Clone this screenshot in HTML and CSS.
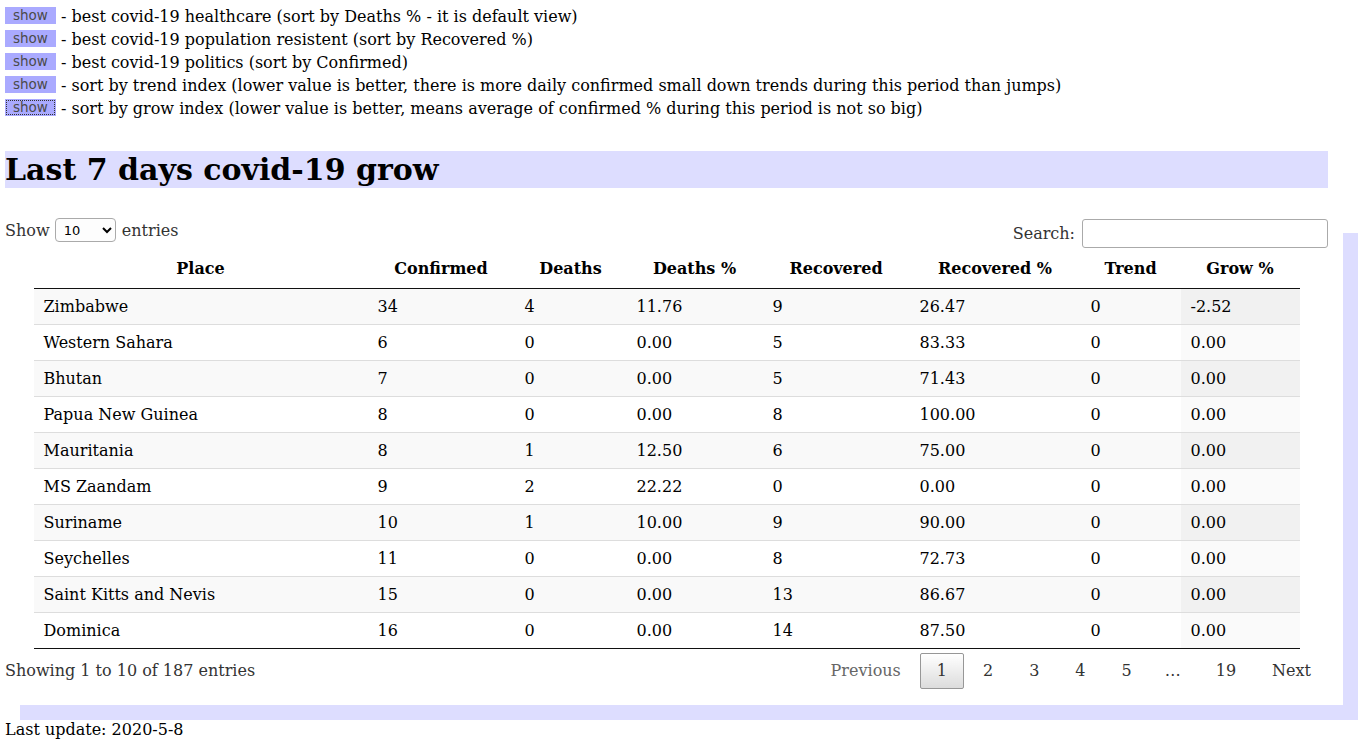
FILE: index.html
```html
<!DOCTYPE html>
<html>
<head>
<meta charset="utf-8">
<title>Last 7 days covid-19 grow</title>
<link rel="stylesheet" href="styles.css">
</head>
<body>
<div class="page">
  <div class="modes">
    <div class="mode"><button class="show">show</button> - best covid-19 healthcare (sort by Deaths % - it is default view)</div>
    <div class="mode"><button class="show">show</button> - best covid-19 population resistent (sort by Recovered %)</div>
    <div class="mode"><button class="show">show</button> - best covid-19 politics (sort by Confirmed)</div>
    <div class="mode"><button class="show">show</button> - sort by trend index (lower value is better, there is more daily confirmed small down trends during this period than jumps)</div>
    <div class="mode"><button class="show focused">show</button> - sort by grow index (lower value is better, means average of confirmed % during this period is not so big)</div>
  </div>

  <h1 class="title">Last 7 days covid-19 grow</h1>

  <div class="wrapper">
    <div class="controls">
      <div class="length">Show <select class="length-select"><option>10</option><option>25</option><option>50</option><option>100</option></select> entries</div>
      <div class="filter">Search:<input class="search" type="search"></div>
    </div>

    <table class="data">
      <colgroup>
        <col class="c1"><col class="c2"><col class="c3"><col class="c4"><col class="c5"><col class="c6"><col class="c7"><col class="c8">
      </colgroup>
      <thead>
        <tr><th>Place</th><th>Confirmed</th><th>Deaths</th><th>Deaths %</th><th>Recovered</th><th>Recovered %</th><th>Trend</th><th>Grow %</th></tr>
      </thead>
      <tbody>
        <tr class="odd"><td>Zimbabwe</td><td>34</td><td>4</td><td>11.76</td><td>9</td><td>26.47</td><td>0</td><td class="sorted">-2.52</td></tr>
        <tr class="even"><td>Western Sahara</td><td>6</td><td>0</td><td>0.00</td><td>5</td><td>83.33</td><td>0</td><td class="sorted">0.00</td></tr>
        <tr class="odd"><td>Bhutan</td><td>7</td><td>0</td><td>0.00</td><td>5</td><td>71.43</td><td>0</td><td class="sorted">0.00</td></tr>
        <tr class="even"><td>Papua New Guinea</td><td>8</td><td>0</td><td>0.00</td><td>8</td><td>100.00</td><td>0</td><td class="sorted">0.00</td></tr>
        <tr class="odd"><td>Mauritania</td><td>8</td><td>1</td><td>12.50</td><td>6</td><td>75.00</td><td>0</td><td class="sorted">0.00</td></tr>
        <tr class="even"><td>MS Zaandam</td><td>9</td><td>2</td><td>22.22</td><td>0</td><td>0.00</td><td>0</td><td class="sorted">0.00</td></tr>
        <tr class="odd"><td>Suriname</td><td>10</td><td>1</td><td>10.00</td><td>9</td><td>90.00</td><td>0</td><td class="sorted">0.00</td></tr>
        <tr class="even"><td>Seychelles</td><td>11</td><td>0</td><td>0.00</td><td>8</td><td>72.73</td><td>0</td><td class="sorted">0.00</td></tr>
        <tr class="odd"><td>Saint Kitts and Nevis</td><td>15</td><td>0</td><td>0.00</td><td>13</td><td>86.67</td><td>0</td><td class="sorted">0.00</td></tr>
        <tr class="even"><td>Dominica</td><td>16</td><td>0</td><td>0.00</td><td>14</td><td>87.50</td><td>0</td><td class="sorted">0.00</td></tr>
      </tbody>
    </table>

    <div class="footer">
      <div class="info">Showing 1 to 10 of 187 entries</div>
      <div class="paginate">
        <a class="pbtn disabled">Previous</a>
        <a class="pbtn current">1</a>
        <a class="pbtn">2</a>
        <a class="pbtn">3</a>
        <a class="pbtn">4</a>
        <a class="pbtn">5</a>
        <span class="ellipsis">&#x2026;</span>
        <a class="pbtn">19</a>
        <a class="pbtn">Next</a>
      </div>
    </div>
  </div>

  <div class="updated">Last update: 2020-5-8</div>
</div>
</body>
</html>
```

FILE: styles.css
```css
html, body {
  background: #fff;
}
body {
  margin: 5px;
  font-family: "DejaVu Serif", serif;
  font-size: 16px;
  color: #000;
}
.page {
  width: 1323px;
}
.modes .mode {
  height: 23px;
  line-height: 23px;
  white-space: nowrap;
}
.show {
  display: inline-block;
  vertical-align: middle;
  position: relative;
  top: -2px;
  height: 17px;
  line-height: 17px;
  padding: 0 8px;
  margin: 0;
  border: none;
  background: #aaaaff;
  color: #4a4a4a;
  font-family: "DejaVu Sans", sans-serif;
  font-size: 13.5px;
}
.show.focused {
  outline: 1px dotted #333;
  outline-offset: -2px;
}
.title {
  margin: 31px 0 30px 0;
  background: #ddddff;
  font-size: 30px;
  font-weight: bold;
  line-height: 37px;
  height: 37px;
}
.wrapper {
  width: 1323px;
  padding: 0 15px 16px 0;
  background: #fff;
  box-shadow: 15px 15px 0 0 #ddddff;
}
.controls {
  display: flex;
  justify-content: space-between;
  align-items: flex-start;
  height: 31px;
  color: #333;
}
.length {
  display: flex;
  align-items: center;
  height: 24px;
  white-space: pre;
}
.length-select {
  width: 61px;
  height: 24px;
  margin: 0 1px 0 0;
  padding: 0 4px;
  border: 1px solid #aaa;
  border-radius: 4px;
  background: #fdfdfd;
  font-family: "DejaVu Sans", sans-serif;
  font-size: 13px;
  color: #000;
}
.filter {
  display: flex;
  align-items: center;
  height: 29px;
  padding-top: 1px;
}
.search {
  box-sizing: border-box;
  width: 246px;
  height: 29px;
  margin-left: 7px;
  margin-top: -1px;
  padding: 5px;
  border: 1px solid #aaa;
  border-radius: 3px;
  background: #fff;
  font-family: "DejaVu Serif", serif;
  font-size: 16px;
}
.data {
  width: 1266px;
  margin: 0 auto;
  table-layout: fixed;
  border-collapse: separate;
  border-spacing: 0;
  border-bottom: 1px solid #111;
}
.c1 { width: 334px; }
.c2 { width: 147px; }
.c3 { width: 112px; }
.c4 { width: 136px; }
.c5 { width: 147px; }
.c6 { width: 171px; }
.c7 { width: 100px; }
.c8 { width: 119px; }
.data th {
  padding: 10px;
  line-height: 19px;
  font-weight: bold;
  text-align: center;
  border-bottom: 1px solid #111;
  white-space: nowrap;
}
.data td {
  padding: 8px 10px;
  line-height: 19px;
  border-top: 1px solid #ddd;
  text-align: left;
  white-space: nowrap;
}
.data tbody tr:first-child td {
  border-top: none;
}
.data tr.odd td {
  background: #f9f9f9;
}
.data tr.even td {
  background: #fff;
}
.data tr.odd td.sorted {
  background: #f1f1f1;
}
.data tr.even td.sorted {
  background: #fafafa;
}
.footer {
  display: flex;
  justify-content: space-between;
  align-items: flex-start;
  color: #333;
}
.info {
  padding-top: 12px;
  line-height: 19px;
}
.paginate {
  display: flex;
  gap: 2px;
  padding-top: 4px;
}
.pbtn {
  display: block;
  padding: 8px 16px;
  line-height: 18px;
  border: 1px solid transparent;
  border-radius: 2px;
  color: #333;
  cursor: pointer;
}
.pbtn.disabled {
  color: #666;
  cursor: default;
}
.pbtn.current {
  border: 1px solid #979797;
  background: linear-gradient(to bottom, #fff 0%, #dcdcdc 100%);
  color: #333;
}
.ellipsis {
  display: block;
  padding: 9px 16px 9px 14px;
  line-height: 18px;
  color: #333;
}
.updated {
  margin-top: 15px;
  line-height: 19px;
}
```
